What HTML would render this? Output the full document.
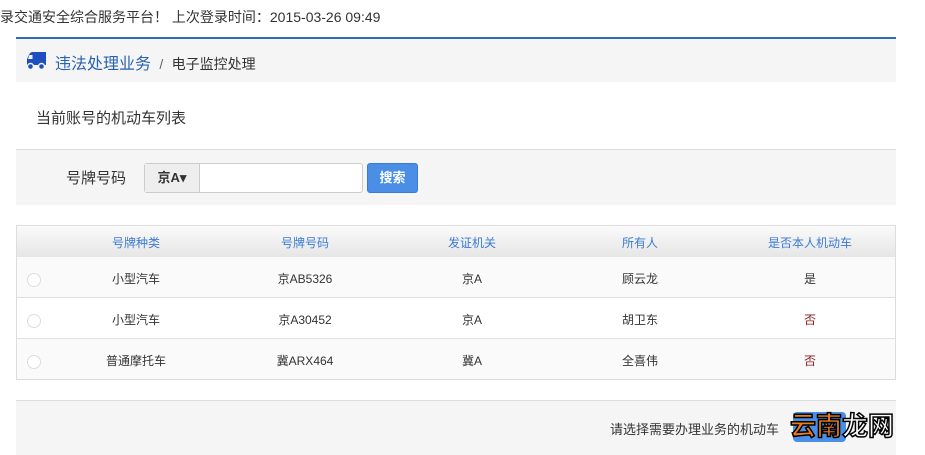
<!DOCTYPE html>
<html><head><meta charset="utf-8"><style>
*{margin:0;padding:0;box-sizing:border-box}
body{width:925px;height:455px;overflow:hidden;background:#fff;font-family:"Liberation Sans","Noto Sans CJK SC",sans-serif;color:#333;position:relative}
.a{position:absolute}
</style></head><body>
<div class="a" style="left:0;top:7px;font-size:14px;color:#333;white-space:nowrap">录交通安全综合服务平台！ 上次登录时间：2015-03-26 09:49</div>
<div class="a" style="left:16px;top:37px;width:880px;height:2px;background:#2d6db5"></div>
<div class="a" style="left:16px;top:39px;width:880px;height:43px;background:#f5f5f5"></div>
<svg class="a" style="left:25px;top:51px" width="22" height="20" viewBox="0 0 22 20"><path d="M7 1h14v13H2V8l3-6z" fill="#1f4fbf"/><path d="M4.5 4h3v4H3z" fill="#f5f5f5"/><circle cx="5.5" cy="15.5" r="3" fill="#1f4fbf" stroke="#f5f5f5" stroke-width="1.4"/><circle cx="16.5" cy="15.5" r="3" fill="#1f4fbf" stroke="#f5f5f5" stroke-width="1.4"/></svg>
<div class="a" style="left:55px;top:50px;font-size:16px;color:#2a62b0;white-space:nowrap">违法处理业务 <span style="color:#666;font-size:14px">&nbsp;/&nbsp;</span> <span style="color:#333;font-size:14px">电子监控处理</span></div>
<div class="a" style="left:36px;top:107px;font-size:15px;color:#333">当前账号的机动车列表</div>
<div class="a" style="left:16px;top:149px;width:880px;height:56px;background:#f5f5f5;border-top:1px solid #ddd"></div>
<div class="a" style="left:66px;top:167px;font-size:15px;color:#333">号牌号码</div>
<div class="a" style="left:144px;top:163px;width:219px;height:30px;border:1px solid #ccc;border-radius:3px;background:#fff"></div>
<div class="a" style="left:145px;top:164px;width:55px;height:28px;background:#eee;border-right:1px solid #ccc;font-size:13px;font-weight:bold;line-height:28px;text-align:center">京A▾</div>
<div class="a" style="left:367px;top:163px;width:51px;height:30px;background:#4a8ee6;border:1px solid #3a7bd5;border-radius:3px;color:#fff;font-size:13px;font-weight:bold;line-height:28px;text-align:center">搜索</div>
<div class="a" style="left:16px;top:225px;width:880px;height:155px;border:1px solid #ddd;background:#fafafa"></div>
<div class="a" style="left:17px;top:226px;width:878px;height:31px;background:linear-gradient(#fafafa,#e6e6e6)"></div>
<div class="a" style="left:17px;top:297px;width:878px;height:1px;background:#e0e0e0"></div>
<div class="a" style="left:17px;top:298px;width:878px;height:40px;background:#fff"></div>
<div class="a" style="left:17px;top:338px;width:878px;height:1px;background:#e0e0e0"></div>
<div style="font-size:12px">
<div class="a" style="top:234px;left:86px;width:100px;text-align:center;color:#3a7bd5">号牌种类</div>
<div class="a" style="top:234px;left:255px;width:100px;text-align:center;color:#3a7bd5">号牌号码</div>
<div class="a" style="top:234px;left:422px;width:100px;text-align:center;color:#3a7bd5">发证机关</div>
<div class="a" style="top:234px;left:590px;width:100px;text-align:center;color:#3a7bd5">所有人</div>
<div class="a" style="top:234px;left:750px;width:120px;text-align:center;color:#3a7bd5">是否本人机动车</div>

<div class="a" style="top:270px;left:86px;width:100px;text-align:center">小型汽车</div>
<div class="a" style="top:270px;left:255px;width:100px;text-align:center">京AB5326</div>
<div class="a" style="top:270px;left:422px;width:100px;text-align:center">京A</div>
<div class="a" style="top:270px;left:590px;width:100px;text-align:center">顾云龙</div>
<div class="a" style="top:270px;left:760px;width:100px;text-align:center">是</div>

<div class="a" style="top:311px;left:86px;width:100px;text-align:center">小型汽车</div>
<div class="a" style="top:311px;left:255px;width:100px;text-align:center">京A30452</div>
<div class="a" style="top:311px;left:422px;width:100px;text-align:center">京A</div>
<div class="a" style="top:311px;left:590px;width:100px;text-align:center">胡卫东</div>
<div class="a" style="top:311px;left:760px;width:100px;text-align:center;color:#8b1a1a">否</div>

<div class="a" style="top:352px;left:86px;width:100px;text-align:center">普通摩托车</div>
<div class="a" style="top:352px;left:255px;width:100px;text-align:center">冀ARX464</div>
<div class="a" style="top:352px;left:422px;width:100px;text-align:center">冀A</div>
<div class="a" style="top:352px;left:590px;width:100px;text-align:center">全喜伟</div>
<div class="a" style="top:352px;left:760px;width:100px;text-align:center;color:#8b1a1a">否</div>
</div>
<div class="a" style="left:27px;top:273px;width:14px;height:14px;border:1px solid #ddd;border-radius:50%;background:#fff"></div>
<div class="a" style="left:27px;top:314px;width:14px;height:14px;border:1px solid #ddd;border-radius:50%;background:#fff"></div>
<div class="a" style="left:27px;top:355px;width:14px;height:14px;border:1px solid #ddd;border-radius:50%;background:#fff"></div>
<div class="a" style="left:16px;top:400px;width:880px;height:55px;background:#f5f5f5;border-top:1px solid #ddd"></div>
<div class="a" style="left:610px;top:419px;font-size:13px;color:#333;white-space:nowrap">请选择需要办理业务的机动车</div>
<div class="a" style="left:793px;top:412px;width:53px;height:30px;background:#4a8ee6;border-radius:4px"></div>
<div class="a" style="left:790px;top:410px;font-size:26px;font-weight:bold;white-space:nowrap;line-height:32px;-webkit-text-stroke:1.5px #000"><span style="color:#f07a1a">云南</span><span style="color:#fff">龙网</span></div>
</body></html>
